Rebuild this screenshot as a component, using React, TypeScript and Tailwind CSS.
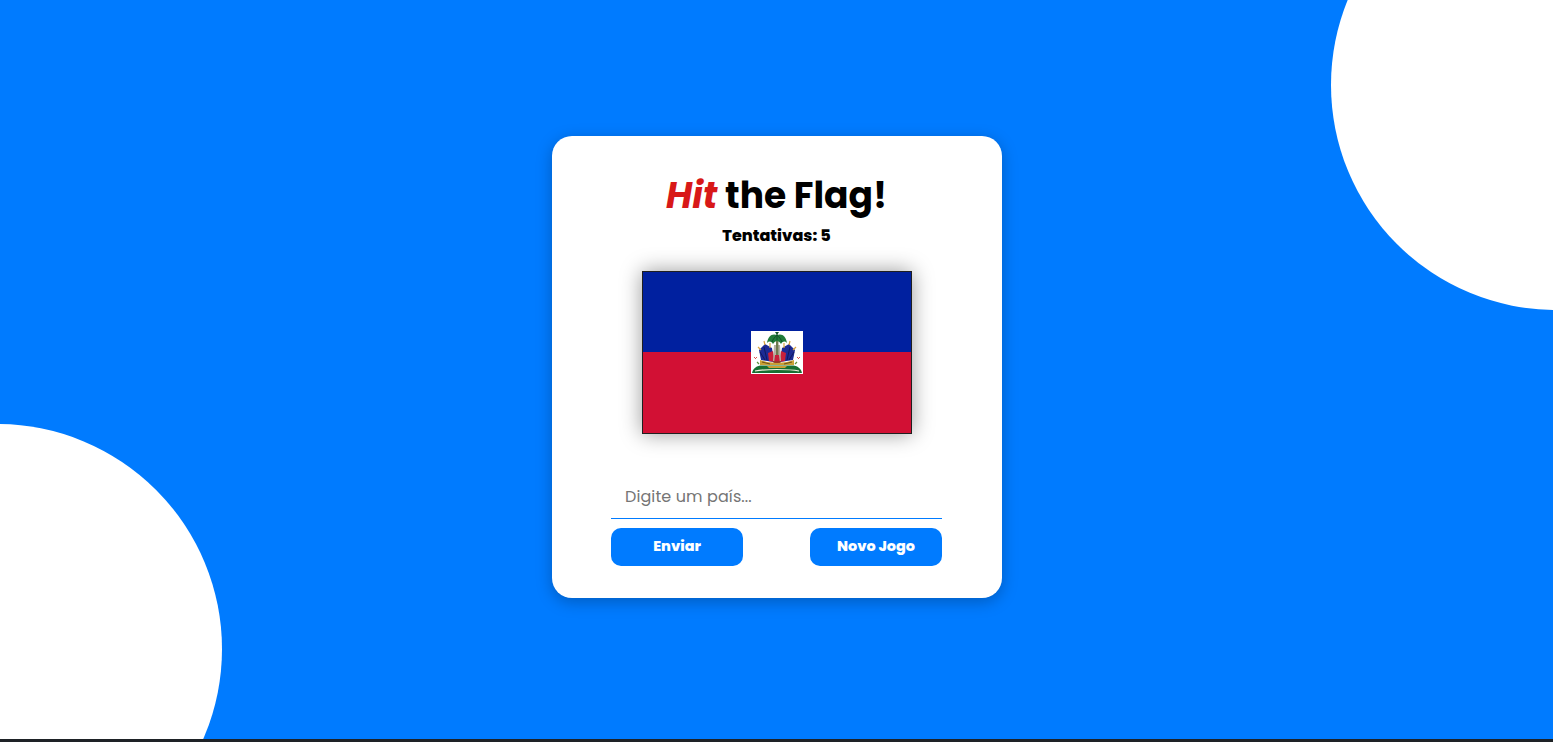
import React from 'react';

const Emblem: React.FC = () => (
  <svg viewBox="0 0 52 43" className="block w-[52px] h-[43px]">
    <rect width="52" height="43" fill="#ffffff" />
    {/* flags, left and right */}
    <path d="M8 19 L14 13 L21 17 L23 31 L10 29 Z" fill="#1c2a94" />
    <path d="M44 19 L38 13 L31 17 L29 31 L42 29 Z" fill="#1c2a94" />
    <path d="M13 16 L16 29 M9 21 L14 29" stroke="#10185e" strokeWidth="1" />
    <path d="M39 16 L36 29 M43 21 L38 29" stroke="#10185e" strokeWidth="1" />
    <path d="M17 22 L22 20 L24 31 L18 30 Z" fill="#c8203a" />
    <path d="M35 22 L30 20 L28 31 L34 30 Z" fill="#c8203a" />
    <path d="M7 16 L10 19 M13 10 L14 14 M19 12 L19 17" stroke="#d9a441" strokeWidth="1.2" />
    <path d="M45 16 L42 19 M39 10 L38 14 M33 12 L33 17" stroke="#d9a441" strokeWidth="1.2" />
    {/* palm */}
    <path d="M23 14 L29 14 L30 30 L22 30 Z" fill="#b5b2a3" />
    <rect x="25" y="10" width="2.4" height="20" fill="#6f7a4e" />
    <path d="M26 4 C21 2 17 5 16 12 C18 10 20 10 22 13 C23 11 25 10 26 10 C27 10 29 11 30 13 C32 10 34 10 36 12 C35 5 31 2 26 4 Z" fill="#1f7a38" />
    <path d="M26 4 C24 6 22 8 21 11 M26 4 C28 6 30 8 31 11 M26 3 L26 9" stroke="#0f5126" strokeWidth="1" fill="none" />
    <path d="M24 1 L26 4 L28 1 Z" fill="#0f5126" />
    {/* drum and trophies */}
    <path d="M24 24 L28 24 L29 32 L23 32 Z" fill="#c8203a" />
    <path d="M9 29 L16 31 L26 32 L36 31 L43 29 L43 34 L9 34 Z" fill="#c99f35" />
    <path d="M11 31 L19 33 M41 31 L33 33 M22 31 L30 31" stroke="#6e5118" strokeWidth="1" />
    <path d="M3 26 L5 28 M4 28 L6 26 M49 26 L47 28 M48 28 L46 26" stroke="#d9534f" strokeWidth="1" />
    <path d="M6 31 L8 33 M46 31 L44 33" stroke="#5b8f3a" strokeWidth="1.2" />
    {/* ground and ribbon */}
    <path d="M1 42 C2 37 6 34.5 11 34.5 L41 34.5 C46 34.5 50 37 51 42 Z" fill="#176f31" />
    <path d="M4 40 C14 38 38 38 48 40" stroke="#f4f1e0" strokeWidth="1.2" fill="none" />
    <path d="M16 35 L36 35 L34 37 L18 37 Z" fill="#c99f35" />
  </svg>
);

const App: React.FC = () => {
  return (
    <div className="relative h-[742px] overflow-hidden bg-[#1e2226] font-['Poppins','Inter','Liberation_Sans',sans-serif]">
      <div className="relative h-[739px] overflow-hidden bg-[#007bff] flex items-start justify-center">
        <div className="absolute -top-[140px] -right-[228px] w-[450px] h-[450px] rounded-full bg-white" />
        <div className="absolute top-[424px] -left-[228px] w-[450px] h-[450px] rounded-full bg-white" />

        <div className="relative mt-[136px] w-[450px] h-[462px] rounded-[20px] bg-white shadow-[0_4px_16px_rgba(0,0,0,0.25)] flex flex-col items-center pt-[35px]">
          <h1 className="h-[50px] leading-[50px] text-[36px] font-bold text-black whitespace-nowrap">
            <em className="text-[#d81818]">Hit</em> the Flag!
          </h1>
          <p className="mt-[3px] h-[24px] leading-[24px] text-[16px] font-extrabold text-black">
            Tentativas: 5
          </p>

          <div className="mt-[23px] w-[270px] h-[163px] border border-[#1f1f1f] bg-[#00209f] shadow-[0_0_20px_rgba(0,0,0,0.4)] flex flex-col relative">
            <div className="h-[80px] bg-[#00209f]" />
            <div className="flex-1 bg-[#d21034]" />
            <div className="absolute left-[108px] top-[59px]">
              <Emblem />
            </div>
          </div>

          <input
            placeholder="Digite um país..."
            className="mt-[40px] w-[331px] h-[45px] px-[14px] text-[16px] tracking-[0.1px] text-black bg-white outline-none border-b border-[#007bff] placeholder:text-[#757575]"
          />
          <div className="mt-[9px] w-[331px] flex justify-between">
            <button className="w-[132px] h-[38px] rounded-[10px] bg-[#007bff] text-white text-[14.4px] font-extrabold">
              Enviar
            </button>
            <button className="w-[132px] h-[38px] rounded-[10px] bg-[#007bff] text-white text-[14.4px] font-extrabold">
              Novo Jogo
            </button>
          </div>
        </div>
      </div>
    </div>
  );
};

export default App;
